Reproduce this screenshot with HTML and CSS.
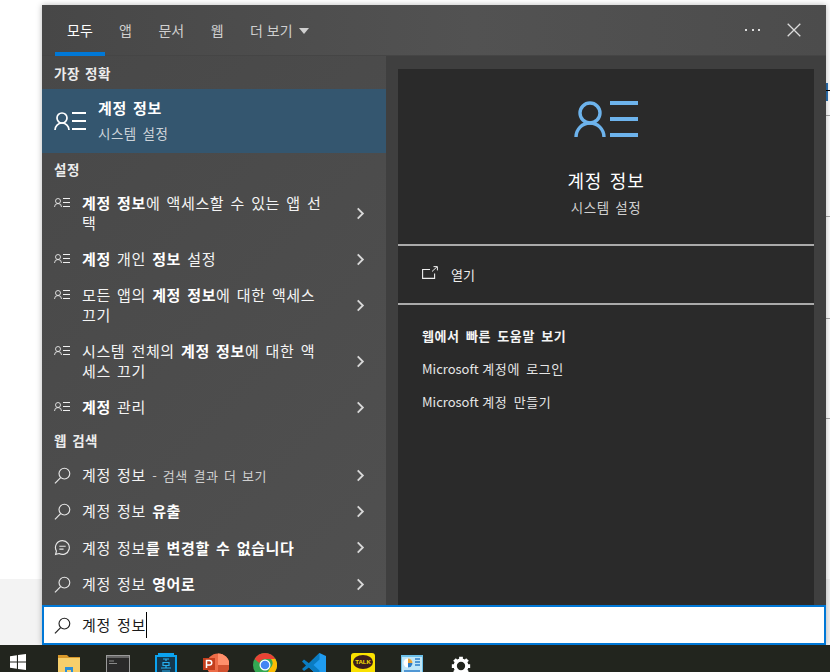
FILE: index.html
```html
<!DOCTYPE html>
<html lang="ko">
<head>
<meta charset="utf-8">
<title>검색</title>
<link rel="stylesheet" href="styles.css">
</head>
<body>
<svg class="sprites" width="0" height="0" aria-hidden="true">
  <symbol id="acct" viewBox="0 0 32 18">
    <circle cx="8" cy="6" r="5" fill="none" stroke="currentColor" stroke-width="1.7"/>
    <path d="M1 18a7 7 0 0 1 14 0" fill="none" stroke="currentColor" stroke-width="1.7"/>
    <path d="M18 1h14M18 9h14M18 17h14" fill="none" stroke="currentColor" stroke-width="2"/>
  </symbol>
  <symbol id="search" viewBox="0 0 18 18">
    <circle cx="11" cy="7" r="5.7" fill="none" stroke="currentColor" stroke-width="1.2"/>
    <path d="M7 11.3 1 17.3" fill="none" stroke="currentColor" stroke-width="1.3"/>
  </symbol>
  <symbol id="chev" viewBox="0 0 9 14">
    <path d="M1.500 1.500 7 7l-5.500 5.500" fill="none" stroke="currentColor" stroke-width="2"/>
  </symbol>
  <symbol id="chat" viewBox="0 0 16 16">
    <path d="M8 1.500a6.500 6.500 0 1 1-3.200 12.200L1.500 14.500l.8-3.200A6.500 6.500 0 0 1 8 1.500z" fill="none" stroke="currentColor" stroke-width="1.100"/>
    <path d="M5 6.800h6M5 9.500h4" fill="none" stroke="currentColor" stroke-width="1.100"/>
  </symbol>
</svg>

<div class="desktop">
  <div class="bg-bottom"></div>
  <div class="edge">
    <span class="edge-blue"></span>
    <span class="edge-black"></span>
    <span class="edge-line l1"></span>
    <span class="edge-line l2"></span>
    <span class="edge-line l3"></span>
    <span class="edge-line l4"></span>
  </div>

  <div class="window">
    <header class="tabs">
      <nav class="tab-list">
        <span class="tab active">모두</span>
        <span class="tab">앱</span>
        <span class="tab">문서</span>
        <span class="tab">웹</span>
        <span class="tab">더 보기 <i class="caret"></i></span>
      </nav>
      <div class="tab-tools">
        <span class="dots"><i></i><i></i><i></i></span>
        <svg class="close" viewBox="0 0 14 14"><path d="M.7.700 13.300 13.300M13.300.700.700 13.300" fill="none" stroke="currentColor" stroke-width="1.300"/></svg>
      </div>
    </header>

    <div class="body">
      <section class="results">
        <h2 class="group first">가장 정확</h2>
        <div class="best">
          <svg class="best-icon"><use href="#acct"/></svg>
          <div class="best-text">
            <strong>계정 정보</strong>
            <span>시스템 설정</span>
          </div>
        </div>

        <h2 class="group">설정</h2>
        <div class="row two"><svg class="ico-acct"><use href="#acct"/></svg><p><b>계정 정보</b>에 액세스할 수 있는 앱 선<br>택</p><svg class="chev"><use href="#chev"/></svg></div>
        <div class="row h36"><svg class="ico-acct"><use href="#acct"/></svg><p><b>계정</b> 개인 <b>정보</b> 설정</p><svg class="chev"><use href="#chev"/></svg></div>
        <div class="row two"><svg class="ico-acct"><use href="#acct"/></svg><p>모든 앱의 <b>계정 정보</b>에 대한 액세스<br>끄기</p><svg class="chev"><use href="#chev"/></svg></div>
        <div class="row two"><svg class="ico-acct"><use href="#acct"/></svg><p>시스템 전체의 <b>계정 정보</b>에 대한 액<br>세스 끄기</p><svg class="chev"><use href="#chev"/></svg></div>
        <div class="row h36"><svg class="ico-acct"><use href="#acct"/></svg><p><b>계정</b> 관리</p><svg class="chev"><use href="#chev"/></svg></div>

        <h2 class="group web">웹 검색</h2>
        <div class="row h36"><svg class="ico-big"><use href="#search"/></svg><p>계정 정보 <small>- 검색 결과 더 보기</small></p><svg class="chev"><use href="#chev"/></svg></div>
        <div class="row h36"><svg class="ico-big"><use href="#search"/></svg><p>계정 정보 <b>유출</b></p><svg class="chev"><use href="#chev"/></svg></div>
        <div class="row h37"><svg class="ico-big"><use href="#chat"/></svg><p>계정 정보<b>를 변경할 수 없습니다</b></p><svg class="chev"><use href="#chev"/></svg></div>
        <div class="row h36"><svg class="ico-big"><use href="#search"/></svg><p>계정 정보 <b>영어로</b></p><svg class="chev"><use href="#chev"/></svg></div>
      </section>

      <aside class="preview-wrap">
        <div class="preview">
          <div class="hero">
            <svg class="hero-icon"><use href="#acct"/></svg>
            <div class="hero-title">계정 정보</div>
            <div class="hero-sub">시스템 설정</div>
          </div>
          <div class="action">
            <svg class="open" viewBox="0 0 16 13"><path d="M8 3.500H.6v8.900h12V7.500" fill="none" stroke="currentColor" stroke-width="1.100"/><path d="M10 5.500 15 .8M11.500.6h3.900v3.800" fill="none" stroke="currentColor" stroke-width="1"/></svg>
            <span>열기</span>
          </div>
          <div class="help">
            <h3>웹에서 빠른 도움말 보기</h3>
            <a>Microsoft <span class="ko">계정에 로그인</span></a>
            <a>Microsoft <span class="ko">계정 만들기</span></a>
          </div>
        </div>
      </aside>
    </div>

    <div class="searchbox">
      <svg class="ico-big"><use href="#search"/></svg>
      <span class="query">계정 정보</span><i class="cursor"></i>
    </div>
  </div>
</div>

<footer class="taskbar">
  <svg class="tb win" viewBox="0 0 16 16"><path fill="#fff" d="M0 2.300 6.900 1.200v6.200H0zM8 1 16 0v7.400H8zM0 8.500h6.900v6.300L0 13.800zM8 8.500h8V16l-8-1.100z"/></svg>
  <svg class="tb folder" viewBox="0 0 22 22"><path fill="#d9982a" d="M0 0h9l2 2h11v20H0z"/><path fill="#f6cf6b" d="M0 3h22v19H0z"/><rect x="7" y="12" width="8" height="8" fill="#2c8fd6"/><rect x="9" y="15" width="4" height="3" fill="#f6cf6b"/></svg>
  <svg class="tb term" viewBox="0 0 24 22"><rect width="24" height="22" fill="#9a9a9a"/><rect x="1" y="1" width="22" height="20" fill="#2a2a2a"/><rect x="1" y="1" width="22" height="2" fill="#666"/><path d="M3 6h5M3 8.500h8" stroke="#8a8a8a" stroke-width="1"/></svg>
  <svg class="tb hwp" viewBox="0 0 22 24"><rect x="1" y="3" width="20" height="22" fill="#14384f" stroke="#0ba3f0" stroke-width="2"/><rect x="3" width="16" height="2" fill="#0ba3f0"/><path d="M8 6h6M11 6v2M8 9.500h6v3H8zM6 15h10M11 12.500V15M7 18h8" fill="none" stroke="#26b0f0" stroke-width="1.200"/></svg>
  <svg class="tb ppt" viewBox="0 0 26 24"><circle cx="15" cy="12" r="11.500" fill="#ed6c47"/><path d="M15 .5A11.500 11.500 0 0 1 26.500 12H15z" fill="#ff8f6b"/><path d="M15 12h11.500A11.500 11.500 0 0 1 15 23.500z" fill="#d35230"/><rect y="5" width="12" height="12" fill="#c43e1c"/><path d="M3.500 15V7.500h3a2 2 0 0 1 0 4.500h-3" fill="none" stroke="#fff" stroke-width="1.500"/></svg>
  <svg class="tb chrome" viewBox="0 0 24 24"><circle cx="12" cy="12" r="12" fill="#34a853"/><path d="M12 0a12 12 0 0 1 10.400 6H12a6 6 0 0 0-5.700 4.100L1.600 6A12 12 0 0 1 12 0z" fill="#ea4335"/><path d="M22.400 6A12 12 0 0 1 12 24l5.200-9A6 6 0 0 0 18 6z" fill="#fbbc05"/><circle cx="12" cy="12" r="5.500" fill="#fff"/><circle cx="12" cy="12" r="4.300" fill="#4285f4"/></svg>
  <svg class="tb code" viewBox="0 0 24 24"><path fill="#0a7cc2" d="M0 8.500 2 6.500l5 3.800V14.500L2 18 0 16l4-3.500z"/><path fill="#1f9cf0" d="M17.500 0 24 3v18l-6.500 3L7 14.500V10.300z"/><path fill="#0a7cc2" d="M7 10.300 17.500 0v6.500L11.500 12l6 5.500V24L7 14.500z"/></svg>
  <div class="tb kakao"><span>TALK</span></div>
  <svg class="tb cpanel" viewBox="0 0 22 22"><rect width="22" height="22" fill="#6cc0ea"/><rect x="1" y="2" width="20" height="18" fill="#bfe6f8"/><circle cx="7" cy="8" r="4.500" fill="#fff"/><path d="M7 8V3.500A4.500 4.500 0 0 1 11.500 8z" fill="#e8a53a"/><path d="M7 8h4.500A4.500 4.500 0 0 1 7 12.500z" fill="#2d7dc8"/><path d="M14 4h5M14 7h5M14 10h5M3 16h16" stroke="#2d7dc8" stroke-width="1.300"/></svg>
  <svg class="tb gear" viewBox="0 0 24 24"><path stroke="#fff" stroke-width="4.500" d="M12 1v22M1 12h22M4.200 4.200l15.600 15.600M4.200 19.800 19.800 4.200"/><circle cx="12" cy="12" r="7" fill="#22251e" stroke="#fff" stroke-width="4"/></svg>
</footer>
</body>
</html>
```
FILE: styles.css
```css
* { box-sizing: border-box; }
html, body { margin: 0; padding: 0; }
body {
  width: 830px;
  height: 672px;
  overflow: hidden;
  display: flex;
  flex-direction: column;
  background: #fff;
  font-family: "Noto Sans CJK KR", "Noto Sans", sans-serif;
}
.sprites { position: absolute; }

.desktop { position: relative; height: 645px; flex: none; }
.bg-bottom { position: absolute; left: 0; right: 0; top: 579px; bottom: 0; background: #f3f3f3; }
.edge { position: absolute; top: 0; right: 0; width: 4px; height: 579px; }
.edge-blue { position: absolute; left: 0; top: 83px; width: 2px; height: 18px; background: #2a6fb0; }
.edge-black { position: absolute; left: 0; right: 0; top: 90px; height: 1px; background: #000; }
.edge-line { position: absolute; left: 0; right: 0; height: 1px; background: #a8a8a8; }
.l1 { top: 115px; } .l2 { top: 216px; } .l3 { top: 318px; } .l4 { top: 418px; }

.window {
  position: absolute;
  left: 42px;
  top: 5px;
  width: 784px;
  height: 640px;
  display: flex;
  flex-direction: column;
  background: #4b4b4b;
  color: #fff;
  box-shadow: 0 0 6px rgba(0,0,0,.28);
}

.tabs {
  height: 51px;
  flex: none;
  display: flex;
  justify-content: space-between;
  background: linear-gradient(90deg, #474747, #525252 55%, #4c4c4c);
  border-bottom: 1px solid #454545;
}
.tab-list { display: flex; padding-left: 13px; }
.tab {
  height: 51px;
  padding: 0 12px;
  margin-right: 2.500px;
  font-size: 14px;
  line-height: 50px;
  color: #cfcfcf;
  white-space: nowrap;
}
.tab.active { color: #fff; box-shadow: inset 0 -4px 0 #0078d7; width: 50px; margin-right: 2px; text-align: center; padding: 0; }
.caret {
  display: inline-block;
  width: 0; height: 0;
  margin-left: 2px;
  vertical-align: 2px;
  border: 5px solid transparent;
  border-top: 6px solid #d0d0d0;
  border-bottom: 0;
}
.tab-tools { display: flex; align-items: center; gap: 27px; padding-right: 25px; padding-bottom: 1px; }
.dots { display: flex; gap: 4.500px; }
.dots i { width: 2px; height: 2px; background: #ddd; }
.close { width: 14px; height: 14px; color: #dcdcdc; }

.body { flex: 1; display: flex; min-height: 0; }

.results {
  width: 344px;
  flex: none;
  background: linear-gradient(135deg, #484848, #505050);
}
.group {
  margin: 0;
  padding: 7px 0 7px 12px;
  font-size: 13.500px;
  font-weight: 700;
  line-height: 18px;
  color: #ececec;
  letter-spacing: .5px;
  word-spacing: 1px;
}
.group.first { padding-top: 8px; padding-bottom: 7px; }
.group.web { padding-top: 6px; padding-bottom: 8px; }

.best {
  height: 64px;
  display: flex;
  align-items: center;
  background: #34566f;
}
.best-icon { width: 32px; height: 18px; margin: 0 12px 0 12px; color: #fff; flex: none; }
.best-text { display: flex; flex-direction: column; }
.best-text strong { font-size: 15px; font-weight: 700; line-height: 22px; margin-top: -3px; letter-spacing: .6px; word-spacing: 1.500px; }
.best-text span { font-size: 13.500px; line-height: 20px; margin-top: 4px; color: #ccd3d9; letter-spacing: .5px; word-spacing: 1.500px; }

.row { display: flex; align-items: center; padding-left: 12px; color: #f4f4f4; }
.row p { margin: 0; width: 264px; font-size: 15px; line-height: 20px; letter-spacing: .6px; word-spacing: 1.500px; white-space: nowrap; }
.row b { font-weight: 700; color: #fff; }
.row small { font-size: 13px; color: #cfcfcf; letter-spacing: .5px; word-spacing: 1.500px; }
.row.two { height: 56px; }
.row.h36 { height: 36px; }
.row.h37 { height: 37px; }
.ico-acct { width: 16px; height: 9px; margin-right: 12px; flex: none; margin-top: -2px; color: #f0f0f0; align-self: flex-start; }
.row.h36 .ico-acct { align-self: center; }
.row.two .ico-acct { margin-top: 13px; }
.ico-big { width: 17px; height: 17px; margin-right: 11px; flex: none; color: #e6e6e6; }
.chev { width: 9px; height: 13px; margin-left: 10px; color: #d8d8d8; flex: none; }

.preview-wrap { flex: 1; background: #3f3f3f; padding: 13px 12px 0; }
.preview { height: 100%; background: #2a2a2a; color: #fff; }
.hero { height: 177px; display: flex; flex-direction: column; align-items: center; border-bottom: 2px solid #aaa; }
.hero-icon { width: 64px; height: 36px; margin-top: 32px; color: #6db3ec; }
.hero-title { font-size: 18px; line-height: 26px; margin-top: 30px; letter-spacing: .7px; word-spacing: 2px; }
.hero-sub { font-size: 13.500px; line-height: 18px; margin-top: 5px; color: #cfcfcf; letter-spacing: .5px; word-spacing: 1.500px; }
.action { height: 59px; display: flex; align-items: center; padding-left: 24px; border-bottom: 2px solid #aaa; font-size: 13px; color: #eee; }
.open { width: 16px; height: 13px; margin-right: 13px; margin-top: -4px; }
.help { padding: 21px 24px 0; display: flex; flex-direction: column; font-size: 13px; color: #e6e6e6; }
.help h3 { margin: 0; font-size: 13px; font-weight: 700; color: #f4f4f4; line-height: 20px; letter-spacing: .6px; word-spacing: 2px; }
.help a { line-height: 20px; margin-top: 13px; }
.help .ko { letter-spacing: .6px; word-spacing: 2px; }

.searchbox {
  height: 40px;
  flex: none;
  display: flex;
  align-items: center;
  padding-left: 10px;
  border: 2px solid #0078d7;
  background: #fff;
  color: #1a1a1a;
}
.searchbox .ico-big { color: #222; }
.query { font-size: 15px; letter-spacing: .6px; word-spacing: 1.500px; margin-top: -2px; }
.cursor { width: 1px; height: 26px; background: #000; }

.taskbar {
  flex: 1;
  position: relative;
  background: #22251e;
  overflow: hidden;
}
.tb { position: absolute; top: 8px; }
.win { left: 10px; top: 9px; width: 16px; height: 16px; }
.folder { left: 58px; top: 10px; width: 22px; height: 22px; }
.term { left: 106px; top: 10px; width: 24px; height: 22px; }
.hwp { left: 155px; top: 8px; width: 22px; height: 24px; }
.ppt { left: 203px; top: 8px; width: 26px; height: 24px; }
.chrome { left: 253px; top: 8px; width: 24px; height: 24px; }
.code { left: 302px; top: 8px; width: 24px; height: 24px; }
.kakao { left: 351px; top: 8px; width: 24px; height: 24px; background: #fae100; border-radius: 3px; display: flex; justify-content: center; }
.kakao span { width: 20px; height: 14px; margin-top: 2px; border-radius: 50%; background: #3b1e1e; color: #fae100; font: 700 6px/14px "Liberation Sans", sans-serif; text-align: center; }
.cpanel { left: 401px; top: 10px; width: 22px; height: 22px; }
.gear { left: 451px; top: 11px; width: 20px; height: 20px; }
```
